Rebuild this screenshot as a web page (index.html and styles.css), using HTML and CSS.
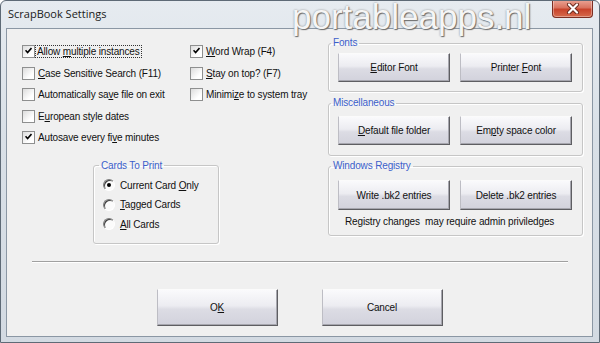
FILE: index.html
```html
<!DOCTYPE html>
<html lang="en">
<head>
    <meta charset="UTF-8">
    <title>ScrapBook Settings</title>
    <link rel="stylesheet" href="styles.css">
</head>
<body>
<div class="window">
    <div class="titlebar">
        <span class="title">ScrapBook Settings</span>
        <button type="button" class="close" aria-label="Close">
            <svg width="14" height="11" viewBox="0 0 14 11">
                <path d="M3 1.5 L11 9.5 M11 1.5 L3 9.5" stroke="#6a2a1e" stroke-width="4" stroke-linecap="round"/>
                <path d="M3 1.5 L11 9.5 M11 1.5 L3 9.5" stroke="#fff" stroke-width="2.2" stroke-linecap="round"/>
            </svg>
        </button>
    </div>

    <div class="client">
        <div class="top">
            <div class="left">
                <div class="checks">
                    <div class="col col-1">
                        <label class="check on"><span class="box"></span><span class="focus">Allow <u>m</u>ultiple instances</span></label>
                        <label class="check"><span class="box"></span><span><u>C</u>ase Sensitive Search (F11)</span></label>
                        <label class="check"><span class="box"></span><span>Automatically sa<u>v</u>e file on exit</span></label>
                        <label class="check"><span class="box"></span><span>E<u>u</u>ropean style dates</span></label>
                        <label class="check on"><span class="box"></span><span>Autosave every fi<u>v</u>e minutes</span></label>
                    </div>
                    <div class="col col-2">
                        <label class="check on"><span class="box"></span><span><u>W</u>ord Wrap (F4)</span></label>
                        <label class="check"><span class="box"></span><span><u>S</u>tay on top? (F7)</span></label>
                        <label class="check"><span class="box"></span><span>Minimi<u>z</u>e to system tray</span></label>
                    </div>
                </div>

                <fieldset class="group cards">
                    <legend>Cards To Print</legend>
                    <label class="radio on"><span class="dot"></span><span>Current Card <u>O</u>nly</span></label>
                    <label class="radio"><span class="dot"></span><span><u>T</u>agged Cards</span></label>
                    <label class="radio"><span class="dot"></span><span><u>A</u>ll Cards</span></label>
                </fieldset>
            </div>

            <div class="right">
                <fieldset class="group fonts">
                    <legend>Fonts</legend>
                    <div class="btn-row">
                        <button type="button" class="btn"><u>E</u>ditor Font</button>
                        <button type="button" class="btn">Printer <u>F</u>ont</button>
                    </div>
                </fieldset>
                <fieldset class="group misc">
                    <legend>Miscellaneous</legend>
                    <div class="btn-row">
                        <button type="button" class="btn"><u>D</u>efault file folder</button>
                        <button type="button" class="btn">Em<u>p</u>ty space color</button>
                    </div>
                </fieldset>
                <fieldset class="group registry">
                    <legend>Windows Registry</legend>
                    <div class="btn-row">
                        <button type="button" class="btn tall">Write .bk2 entries</button>
                        <button type="button" class="btn tall">Delete .bk2 entries</button>
                    </div>
                    <div class="note">Registry changes  may require admin priviledges</div>
                </fieldset>
            </div>
        </div>

        <div class="sep"></div>

        <div class="actions">
            <button type="button" class="btn big">O<u>K</u></button>
            <button type="button" class="btn big">Cancel</button>
        </div>
    </div>

    <div class="watermark">portableapps.nl</div>
</div>
</body>
</html>
```

FILE: styles.css
```css
body { margin: 0; font-family: "Liberation Sans", Arial, sans-serif; font-size: 10px; letter-spacing: -0.15px; color: #111; }
u { text-decoration-thickness: 1px; text-underline-offset: 1px; }

.window { position: relative; width: 600px; height: 343px; box-sizing: border-box; display: flex; flex-direction: column; overflow: hidden;
    border: 1px solid #5e6a76; border-radius: 6px 6px 0 0; background: linear-gradient(#e6ebf0, #d9e0e7 40%, #d3dae2); }

.titlebar { height: 27px; display: flex; align-items: flex-start; padding-left: 7px; flex-shrink: 0; }
.title { font-family: "Open Sans", "Noto Sans", sans-serif; font-size: 11px; letter-spacing: 0; padding-top: 5px; color: #1a1a1a; }
.close { margin: -1px 6px 0 auto; width: 41px; height: 18px; padding: 0; display: flex; align-items: center; justify-content: center;
    border: 1px solid #7c2e22; border-top: none; border-radius: 0 0 4px 4px;
    background: linear-gradient(#eba596, #d9735f 45%, #c8432b 55%, #d66a4c); box-shadow: inset 0 0 0 1px rgba(255,255,255,0.35); }

.client { flex: 1; margin: 0 6px 5px 5px; background: #f0f0f0; border: 1px solid #8b97a4; }

.top { display: flex; height: 232px; }
.left { width: 321px; padding: 12px 0 0 15px; box-sizing: border-box; }
.checks { display: flex; }
.col-1 { width: 168px; }
.check { display: flex; align-items: center; height: 21.5px; white-space: nowrap; }
.box { width: 11px; height: 11px; border: 1px solid #8e8f8f; background: linear-gradient(135deg, #dcdcdc, #fff 70%); margin-right: 3px; position: relative; }
.check.on .box::after { content: ""; position: absolute; left: 2px; top: 1px; width: 7px; height: 7px;
    background: no-repeat center/7px 7px url("data:image/svg+xml,%3Csvg xmlns='http://www.w3.org/2000/svg' viewBox='0 0 7 7'%3E%3Cpath d='M0.5 3.2 L2.6 5.5 L6.5 1' fill='none' stroke='%23000' stroke-width='1.6'/%3E%3C/svg%3E"); }
.focus { outline: 1px dotted #333; outline-offset: 0; padding: 0 1px; margin-left: -2px; }

.group { margin: 0; padding: 4px 10px 9px 9px; border: 1px solid #c6c6c6; border-radius: 3px; box-shadow: 1px 1px 0 #fff, inset 1px 1px 0 #fff; }
.group legend { padding: 0 2px; margin-left: -7px; line-height: 12px; color: #3c5fcb; }

.cards { width: 126px; box-sizing: border-box; margin: 11px 0 0 71px; padding: 4px 4px 9px 9px; }
.cards legend { margin-left: -4px; }
.radio { display: flex; align-items: center; height: 19.5px; white-space: nowrap; }
.dot { width: 10px; height: 10px; border-radius: 50%; margin-right: 5px; border: 1px solid; border-color: #7d7d7d #fff #fff #7d7d7d;
    background: #fbfbfb; box-shadow: inset 1px 1px 0 #404040; display: flex; align-items: center; justify-content: center; }
.radio.on .dot::after { content: ""; width: 4px; height: 4px; border-radius: 50%; background: #000; }

.right { width: 254px; display: flex; flex-direction: column; }
.fonts { margin-top: 8px; }
.misc { margin-top: 5px; padding-top: 7px; padding-bottom: 10px; }
.registry { margin-top: 4px; padding-top: 8px; padding-bottom: 7px; }
.btn-row { display: flex; gap: 10px; }
.btn { width: 112px; height: 29px; padding: 0; font-family: inherit; font-size: 10px; letter-spacing: -0.15px; color: #111;
    border: 1px solid; border-color: #fbfbfb #5e5e62 #5e5e62 #bdbdc4;
    background: linear-gradient(#fafafc, #ececf1 45%, #dcdce4 55%, #d2d2dc); box-shadow: inset -1px -1px 0 #a6a6ae; }
.btn.tall { height: 30px; }
.note { white-space: pre; margin: 6px 0 0 7px; line-height: 12px; }

.sep { margin: 0 24px 0 25px; border-top: 1px solid #a0a0a0; border-bottom: 1px solid #fff; }
.actions { display: flex; justify-content: center; gap: 44px; padding-top: 26px; }
.btn.big { width: 121px; height: 37px; }

.watermark { position: absolute; left: 291px; top: -2px; font-size: 35px; line-height: 36px; letter-spacing: 0; color: #f5f5f5; pointer-events: none;
    text-shadow: 1px 1px 1px #6d6d6d, 0 0 2px #8a8a8a; }
```
